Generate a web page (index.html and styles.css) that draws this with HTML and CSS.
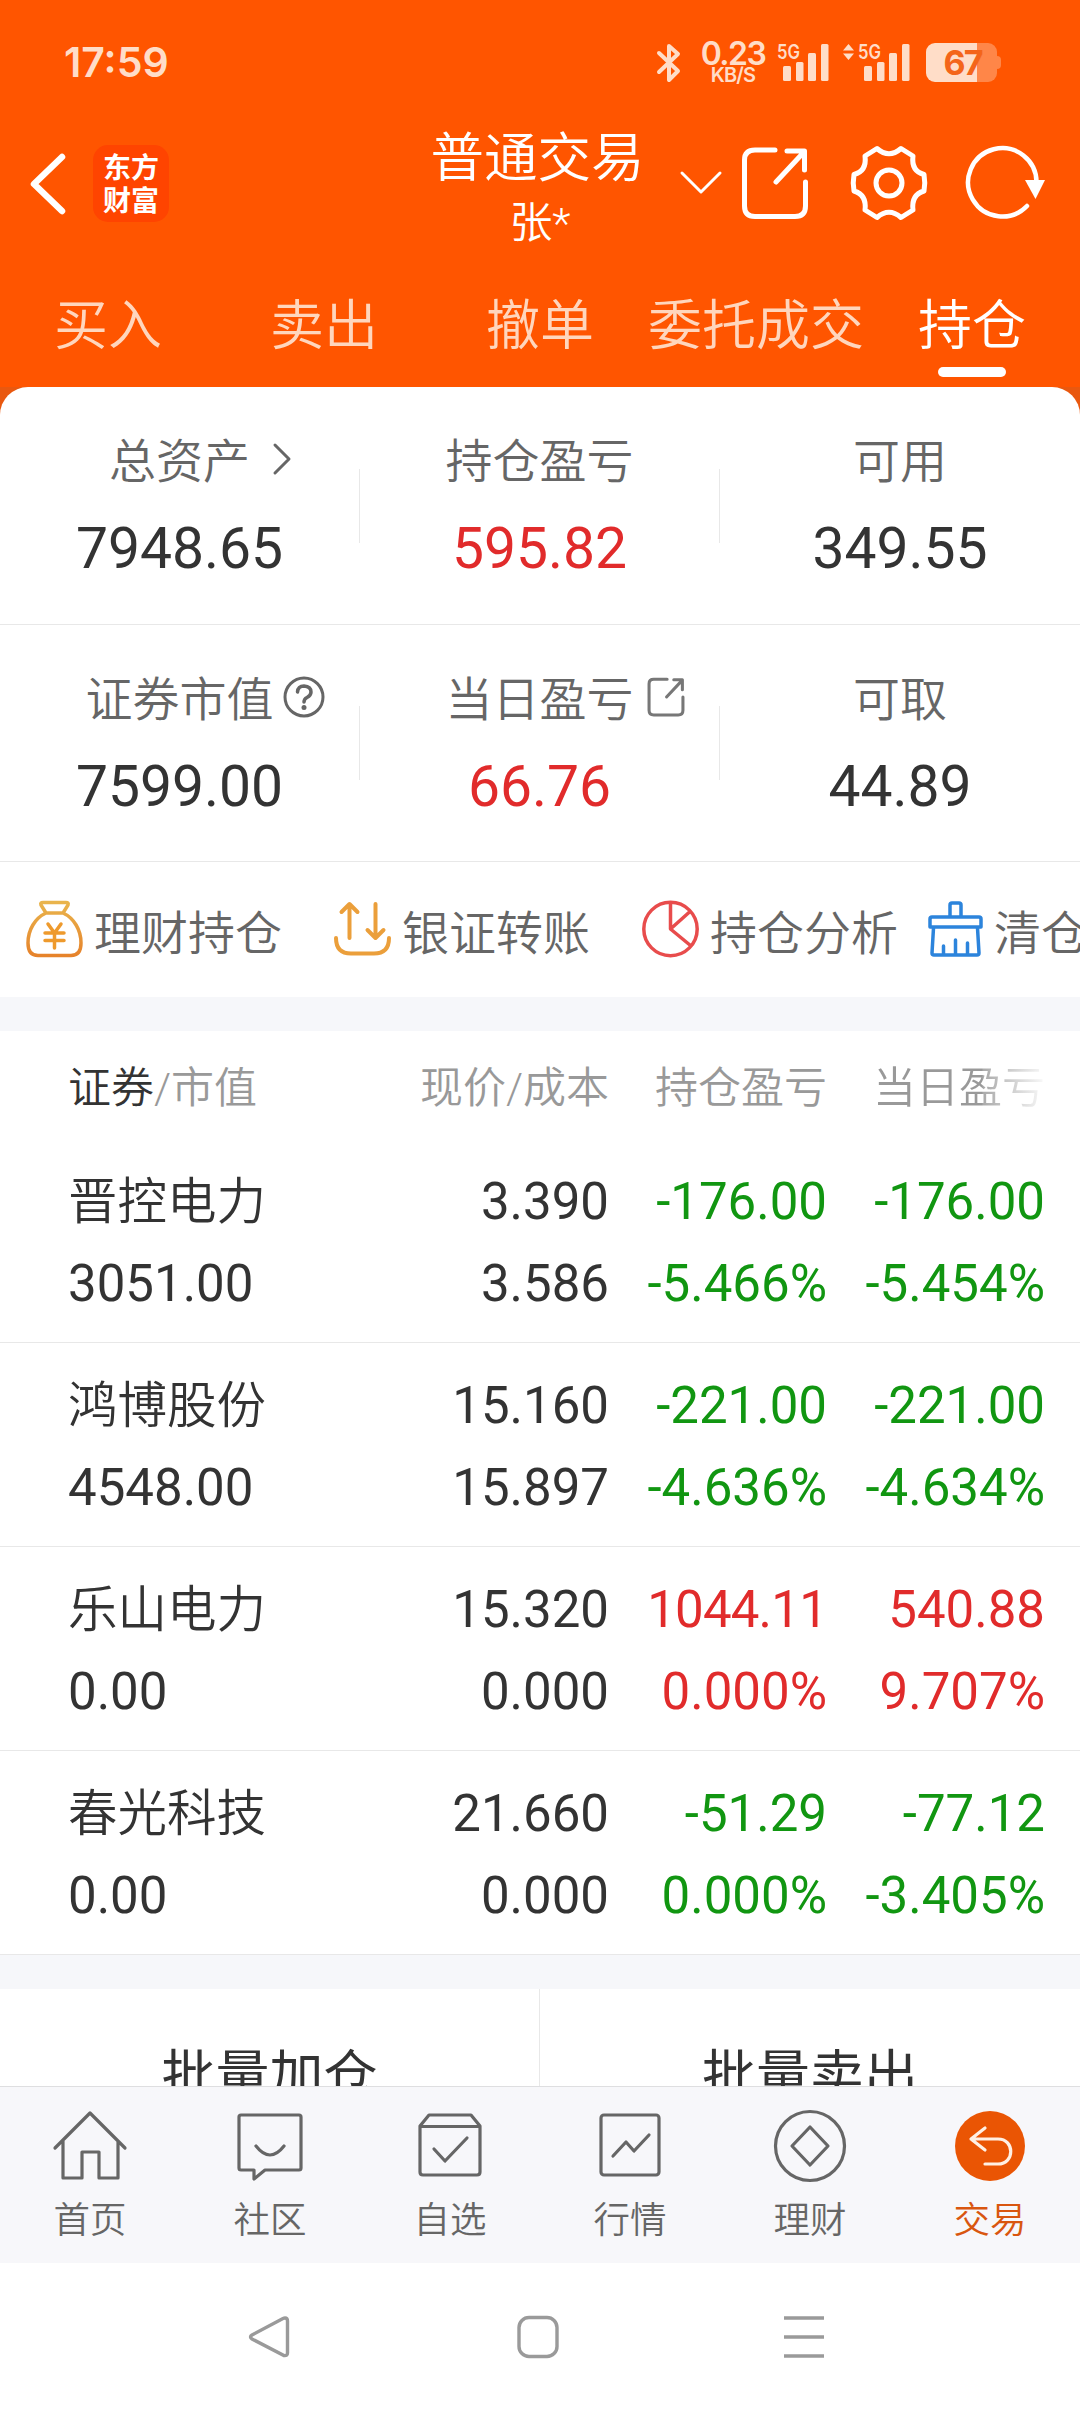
FILE: index.html
```html
<!DOCTYPE html>
<html lang="zh-CN">
<head>
<meta charset="utf-8">
<title>普通交易</title>
<link rel="stylesheet" href="styles.css">
</head>
<body>
<div class="app">
  <header class="head">
    <div class="status">
      <span class="clock">17:59</span>
      <svg class="bt" width="24" height="42" viewBox="0 0 24 42" fill="none" stroke="currentColor" stroke-width="4" stroke-linejoin="round" stroke-linecap="round"><path d="M2 11 L21 29 L12 38 V4 L21 12 L2 30"/></svg>
      <span class="speed"><b>0.23</b><i>KB/S</i></span>
      <svg class="sig" width="52" height="42" viewBox="0 0 52 42" fill="currentColor"><text class="g5" x="0" y="17" textLength="23" lengthAdjust="spacingAndGlyphs">5G</text><rect x="6" y="24" width="8" height="15" rx="1.5"/><rect x="19" y="20" width="7.5" height="19" rx="1.5"/><rect x="31" y="11" width="8" height="28" rx="1.5"/><rect x="44" y="2" width="7.5" height="37" rx="1.5"/></svg>
      <svg class="sig2" width="68" height="42" viewBox="0 0 68 42" fill="currentColor"><path d="M0 8.500 L5.500 2 L11 8.500Z M0 11.500 L5.500 18 L11 11.500Z"/><g transform="translate(15 0)"><text class="g5" x="0" y="17" textLength="23" lengthAdjust="spacingAndGlyphs">5G</text><rect x="6" y="24" width="8" height="15" rx="1.500"/><rect x="19" y="20" width="7.500" height="19" rx="1.500"/><rect x="31" y="11" width="8" height="28" rx="1.500"/><rect x="44" y="2" width="7.500" height="37" rx="1.500"/></g></svg>
      <span class="batt"><span class="cell">67</span><span class="cap"></span></span>
    </div>
    <div class="titlebar">
      <div class="left">
        <svg width="38" height="66" viewBox="0 0 38 66" fill="none" stroke="#fff" stroke-width="6.500" stroke-linecap="round" stroke-linejoin="round"><path d="M33 6 L5 33 L33 60"/></svg>
        <div class="logo"><span>东方</span><span>财富</span></div>
      </div>
      <div class="title"><strong>普通交易</strong><span>张*</span></div>
      <div class="tools">
        <svg class="down" width="42" height="26" viewBox="0 0 42 26" fill="none" stroke="#fff" stroke-width="3" stroke-linecap="round" stroke-linejoin="round"><path d="M2 3 L21 22 L40 3"/></svg>
        <svg class="share" width="68" height="74" viewBox="0 0 68 74" fill="none" stroke="#fff" stroke-width="5" stroke-linecap="round" stroke-linejoin="round"><path d="M34 4 H14 Q3.500 4 3.500 14 V60 Q3.500 70.500 14 70.500 H54 Q64.500 70.500 64.500 60 V36 M46 5 H63.500 V24 M63 6 L35 36"/></svg>
        <svg class="gear" width="76" height="76" viewBox="0 0 76 76" fill="none" stroke="#fff" stroke-width="5" stroke-linejoin="round"><path d="M26 3.500 Q38 14 50 3.500 L62 11 Q60 26 73 29.500 Q74.500 38 73 46 Q60 50 62 65 L50 72.500 Q38 62 26 72.500 L14 65 Q16 50 3 46 Q1.500 38 3 29.500 Q16 26 14 11 Z"/><circle cx="38" cy="38" r="13"/></svg>
        <svg class="refresh" width="80" height="76" viewBox="0 0 80 76"><path d="M70.500 38 A34.200 34.200 0 1 0 61 61" fill="none" stroke="#fff" stroke-width="4.500" stroke-linecap="round"/><path d="M59 35 H79 L69.500 54Z" fill="#fff"/></svg>
      </div>
    </div>
    <nav class="tabs"><a>买入</a><a>卖出</a><a>撤单</a><a>委托成交</a><a class="on">持仓</a></nav>
  </header>

  <main class="content">
    <div class="summary-wrap">
      <section class="summary">
        <div class="cell3"><p class="lab">总资产<svg class="gt" width="20" height="34" viewBox="0 0 20 34" fill="none" stroke="#666" stroke-width="3" stroke-linecap="round" stroke-linejoin="round"><path d="M3 3 L17 17 L3 31"/></svg></p><p class="val">7948.65</p></div>
        <div class="cell3"><p class="lab">持仓盈亏</p><p class="val up">595.82</p></div>
        <div class="cell3"><p class="lab">可用</p><p class="val">349.55</p></div>
      </section>
      <section class="summary">
        <div class="cell3"><p class="lab nudge-q">证券市值<svg class="q" width="42" height="42" viewBox="0 0 42 42" fill="none" stroke="#666" stroke-width="3" stroke-linecap="round"><circle cx="21" cy="21" r="19"/><path d="M14.500 16 Q15 10 21 10 Q28 10.500 28 16 Q28 19.500 24 21.500 Q21 23 21 26" stroke-width="3.500"/><circle cx="21" cy="31.500" r="2.500" fill="#666" stroke="none"/></svg></p><p class="val">7599.00</p></div>
        <div class="cell3"><p class="lab">当日盈亏<svg class="s" width="40" height="40" viewBox="0 0 68 72" fill="none" stroke="#777" stroke-width="5.500" stroke-linecap="round" stroke-linejoin="round"><path d="M36 4 H12 Q3.500 4 3.500 12 V60 Q3.500 68.500 12 68.500 H56 Q64.500 68.500 64.500 60 V36 M48 5 H63.500 V23 M63 6 L35 36"/></svg></p><p class="val up">66.76</p></div>
        <div class="cell3"><p class="lab">可取</p><p class="val">44.89</p></div>
      </section>
      <section class="actions">
        <a class="a1"><svg width="57" height="58" viewBox="0 0 57 58" fill="none" stroke="url(#gold)" stroke-width="3.500" stroke-linecap="round" stroke-linejoin="round"><defs><linearGradient id="gold" x1="0" y1="0" x2="0" y2="1"><stop offset="0" stop-color="#e9b44c"/><stop offset="1" stop-color="#e6832b"/></linearGradient></defs><path d="M20 13 L15 5 Q14 2.500 17 2.500 H40 Q43 2.500 42 5 L37 13 Z M20 13 C9 18 2 30 2 43 Q2 55.500 12 55.500 H45 Q55 55.500 55 43 C55 30 48 18 37 13"/><path stroke="#ee9a2d" d="M22 24 L28.500 33 L35 24 M28.500 33 V48 M19 33 H38 M19 40.500 H38"/></svg>理财持仓</a>
        <a class="a2"><svg width="57" height="58" viewBox="0 0 57 58" fill="none" stroke="#eb9f3b" stroke-width="4" stroke-linecap="round" stroke-linejoin="round"><path d="M2 38 Q2 53.500 17 53.500 H40 Q55 53.500 55 38"/><path d="M15.500 38 V5 M7.500 12 L15.500 4 L23.500 12 M41.500 4 V37 M33.500 30 L41.500 38 L49.500 30"/></svg>银证转账</a>
        <a class="a3"><svg width="57" height="58" viewBox="0 0 57 58" fill="none" stroke="#e84c4c" stroke-width="3.500" stroke-linejoin="round"><circle cx="28.500" cy="29" r="26.700"/><path d="M28.500 2 V29 L47.500 12 M28.500 29 L48.500 45.500"/></svg>持仓分析</a>
        <a class="a4"><svg width="55" height="58" viewBox="0 0 55 58" fill="none" stroke="#2c84dc" stroke-width="3.500" stroke-linecap="round" stroke-linejoin="round"><path d="M22 16 V5 Q22 3 24 3 H31 Q33 3 33 5 V16 M4 17 H51 Q53 17 53 19 V27 H2 V19 Q2 17 4 17 Z M5.500 28 L4 53 Q4 55 6 55 H49 Q51 55 51 53 L49.500 28 M15.500 46 V54 M27.500 40 V54 M39.500 43 V54"/></svg>清仓</a>
      </section>
    </div>

    <section class="table">
      <div class="row th"><span class="c1"><em>证券</em>/市值</span><span>现价/成本</span><span>持仓盈亏</span><span class="fade">当日盈亏</span></div>
      <div class="row"><div class="c1"><p class="name">晋控电力</p><p>3051.00</p></div><div><p>3.390</p><p>3.586</p></div><div class="down-c"><p>-176.00</p><p>-5.466%</p></div><div class="down-c"><p>-176.00</p><p>-5.454%</p></div></div>
      <div class="row"><div class="c1"><p class="name">鸿博股份</p><p>4548.00</p></div><div><p>15.160</p><p>15.897</p></div><div class="down-c"><p>-221.00</p><p>-4.636%</p></div><div class="down-c"><p>-221.00</p><p>-4.634%</p></div></div>
      <div class="row"><div class="c1"><p class="name">乐山电力</p><p>0.00</p></div><div><p>15.320</p><p>0.000</p></div><div class="up"><p class="tight">1044.11</p><p>0.000%</p></div><div class="up"><p>540.88</p><p>9.707%</p></div></div>
      <div class="row"><div class="c1"><p class="name">春光科技</p><p>0.00</p></div><div><p>21.660</p><p>0.000</p></div><div class="down-c"><p>-51.29</p><p>0.000%</p></div><div class="down-c"><p>-77.12</p><p>-3.405%</p></div></div>
    </section>
    <section class="batch"><a>批量加仓</a><a>批量卖出</a></section>
  </main>

  <nav class="bottom">
    <a><svg width="76" height="76" viewBox="0 0 76 76"><path d="M3 40 L38 5 L73 40 M11 33 V70 H30 V44 H47 V70 H66 V33"/></svg>首页</a>
    <a><svg width="76" height="76" viewBox="0 0 76 76"><path d="M9 7 H67 Q69 7 69 9 V60 Q69 62 67 62 H33 L22 71 V62 H9 Q7 62 7 60 V9 Q7 7 9 7Z"/><path d="M24 38 Q38 56 52 38"/></svg>社区</a>
    <a><svg width="76" height="76" viewBox="0 0 76 76"><path d="M8 18 L17 7 H59 L68 18 V64 Q68 67 65 67 H11 Q8 67 8 64 Z M8 18.500 H68 M22 41 L33 53 L55 30"/></svg>自选</a>
    <a><svg width="76" height="76" viewBox="0 0 76 76"><rect x="9" y="7" width="58" height="60" rx="3"/><path d="M21 48 L34 34 L42 43 L57 27"/></svg>行情</a>
    <a><svg width="76" height="76" viewBox="0 0 76 76"><circle cx="38" cy="38" r="34.500"/><path d="M38 19 L56 38 L38 57 L20 38Z"/></svg>理财</a>
    <a class="on"><svg width="76" height="76" viewBox="0 0 76 76"><circle cx="38" cy="38" r="35" fill="#ea5504" stroke="none"/><path stroke="#fff0e4" d="M33 20 L19 31 L33 42 M19 31 H46 C63 31 63 56 46 56 H33"/></svg>交易</a>
  </nav>
  <div class="sysnav">
    <svg width="42" height="44" viewBox="0 0 42 44"><path d="M37 3 Q39.500 3 39.500 6 V38 Q39.500 41 36 40.500 L4 24 Q1 22 4 20 L35 3.500 Q36 3 37 3Z"/></svg>
    <svg class="home" width="42" height="44" viewBox="0 0 42 44"><rect x="2" y="2.500" width="38" height="39" rx="10"/></svg>
    <svg class="menu" width="42" height="44" viewBox="0 0 42 44"><path d="M1 3 H41 M1 22 H41 M1 41 H41"/></svg>
  </div>
</div>
</body>
</html>
```
FILE: styles.css
```css
* { box-sizing: border-box; margin: 0; padding: 0; }
body { width: 1080px; height: 2412px; overflow: hidden; background: #fff; font-family: Roboto, "Noto Sans CJK SC", sans-serif; color: #333; }
svg { display: block; flex: none; overflow: visible; }
.app { display: flex; flex-direction: column; width: 1080px; height: 2412px; }
.head { height: 387px; background: #f50; color: #fff; flex: none; }

.status { display: flex; align-items: flex-start; height: 125px; padding: 42px 0 0 64px; color: #ffddc8; font-family: Inter, sans-serif; }
.clock { width: 593px; margin-top: -1px; font-size: 41px; line-height: 42px; font-weight: 600; }
.bt { margin-right: 20px; }
.speed { display: flex; flex-direction: column; align-items: center; width: 64px; font-weight: 600; }
.speed b { font-size: 32px; line-height: 23px; font-weight: 600; letter-spacing: -1.500px; }
.speed i { font-style: normal; font-size: 20px; line-height: 20px; letter-spacing: -.8px; }
.sig { margin-left: 12px; }
.g5 { font: 600 20px Inter, sans-serif; }
.sig2 { margin-left: 14px; }
.batt { display: flex; align-items: center; margin: 1px 0 0 15px; }
.cell { width: 71px; height: 39px; border-radius: 9px; background: linear-gradient(90deg, #ffddc8 51px, #ff8648 51px); color: #f4651a; font-size: 34px; line-height: 39px; font-weight: 700; text-align: center; letter-spacing: -2px; padding-left: 2px; }
.cap { width: 4px; height: 13px; border-radius: 0 4px 4px 0; background: #ff8648; }

.titlebar { display: grid; grid-template-columns: 400px 280px 400px; height: 138px; }
.left { display: flex; align-items: center; padding: 0 0 23px 29px; margin-top: 2px; }
.logo { display: flex; flex-direction: column; align-items: center; justify-content: center; width: 76px; height: 77px; margin-left: 26px; padding-bottom: 2px; border-radius: 15px; background: #ff4400; font: 700 28px/33px "Noto Sans CJK SC", sans-serif; }
.title { display: flex; flex-direction: column; align-items: center; padding-top: 2px; }
.title strong { font-weight: 350; font-size: 53.500px; line-height: 64px; margin-left: -5px; }
.title span { font-weight: 350; font-size: 43px; line-height: 64px; }
.tools { display: flex; height: 115px; align-items: center; }
.share { margin-left: 19px; }
.gear { margin-left: 42px; }
.refresh { margin-left: 39px; }

.tabs { display: grid; grid-template-columns: repeat(5, 216px); height: 124px; }
.tabs a { display: flex; flex-direction: column; align-items: center; font-size: 54px; line-height: 92px; font-weight: 350; color: #ffd6bd; white-space: nowrap; padding-top: 18px; }
.tabs .on { color: #fff; }
.tabs .on::after { content: ""; width: 68px; height: 10px; margin-top: -6px; border-radius: 5px; background: #fff; }

.content { flex: 1; min-height: 0; overflow: hidden; background: #f6f7fa; }
.summary-wrap { height: 610px; background: linear-gradient(#e9580f 40px, #fff 40px); }
.summary { display: grid; grid-template-columns: repeat(3, 360px); align-items: center; height: 237px; background: #fff; border-bottom: 1px solid #e8e8e8; }
.summary:first-child { height: 238px; border-radius: 28px 28px 0 0; }
.cell3 { display: flex; flex-direction: column; align-items: center; justify-content: center; height: 74px; border-right: 1px solid #e8e8e8; padding-top: 3px; }
.cell3:last-child { border-right: 0; }
.lab { display: flex; align-items: center; height: 84px; font-size: 47px; line-height: 84px; color: #666; font-weight: 350; white-space: nowrap; }
.val { height: 90px; font-size: 57px; line-height: 90px; }
.gt { margin: -6px -42px 0 22px; }
.q { margin: -6px 0 0 9px; }
.s { margin: -6px -52px 0 12px; }
.nudge-q { margin-left: 51px; }
.up { color: #e12b2b; }
.down-c { color: #119611; }

.actions { display: flex; align-items: center; height: 135px; padding: 0 0 1px 26px; background: #fff; overflow: hidden; }
.actions a { display: flex; align-items: center; gap: 11px; flex: none; font-size: 47px; font-weight: 350; color: #666; white-space: nowrap; }
.a1, .a2 { width: 308px; }
.a3 { width: 286px; }

.table { margin-top: 34px; background: #fff; }
.row { display: grid; grid-template-columns: 341px 200px 218px 218px; padding-left: 68px; height: 204px; border-bottom: 1px solid #e8e8e8; text-align: right; font-size: 51px; line-height: 82px; padding-top: 22px; white-space: nowrap; }
.row .c1 { text-align: left; }
.row p { height: 82px; }
.row .name { font-size: 49.500px; font-weight: 350; }
.tight { letter-spacing: -.8px; }
.th { height: 108px; border: 0; padding-top: 3px; font-size: 43px; line-height: 108px; font-weight: 350; color: #999; }
.th em { font-style: normal; color: #333; }
.fade { background: linear-gradient(90deg, #999 155px, #aaa 156px, #fff 222px); -webkit-background-clip: text; background-clip: text; color: transparent; }

.batch { display: grid; grid-template-columns: 1fr 1fr; height: 170px; margin-top: 34px; background: #fff; }
.batch a { font-size: 54px; line-height: 176px; text-align: center; }
.batch a:first-child { border-right: 1px solid #e8e8e8; }

.bottom { display: grid; grid-template-columns: repeat(6, 180px); height: 177px; flex: none; border-top: 1px solid #dedee0; background: #f7f7fa; }
.bottom a { display: flex; flex-direction: column; align-items: center; padding-top: 21px; font-size: 36.500px; line-height: 73px; font-weight: 350; color: #666; }
.bottom svg { fill: none; stroke: #666; stroke-width: 3.200; stroke-linejoin: round; stroke-linecap: round; }
.bottom .on { color: #d9560f; }
.sysnav { display: flex; align-items: center; height: 149px; padding: 0 0 1px 248px; background: #fff; flex: none; }
.sysnav svg { fill: none; stroke: #9a9a9a; stroke-width: 3.400; }
.home { margin-left: 227px; }
.menu { margin-left: 224px; }
```
